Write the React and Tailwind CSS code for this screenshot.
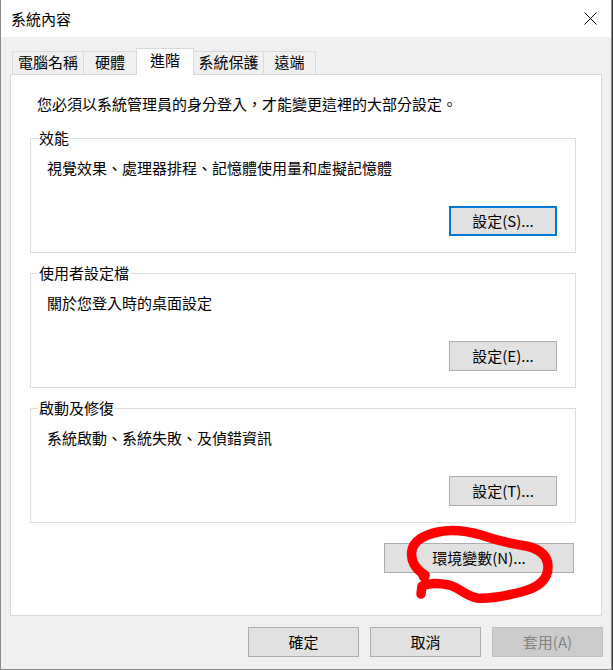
const font = "font-['Noto_Sans_CJK_TC','Noto_Sans_CJK_JP',sans-serif]";

const tabs = [
  { label: "電腦名稱", w: "w-[72px]" },
  { label: "硬體", w: "w-[54px]" },
  { label: "進階", w: "w-[58px]", active: true },
  { label: "系統保護", w: "w-[71px]" },
  { label: "遠端", w: "w-[53px]" },
];

const groups = [
  { title: "效能", desc: "視覺效果、處理器排程、記憶體使用量和虛擬記憶體", btn: "設定(S)...", focused: true },
  { title: "使用者設定檔", desc: "關於您登入時的桌面設定", btn: "設定(E)..." },
  { title: "啟動及修復", desc: "系統啟動、系統失敗、及偵錯資訊", btn: "設定(T)..." },
];

const WinButton = ({ children, className = "", focused, disabled }) => (
  <button
    className={
      "h-[30px] flex items-center justify-center text-[15px] leading-[20px] " +
      (disabled
        ? "bg-[#cccccc] border border-[#bfbfbf] text-[#838383] "
        : focused
        ? "bg-[#e1e1e1] border-2 border-[#0078d7] text-black "
        : "bg-[#e1e1e1] border border-[#adadad] text-black ") +
      className
    }
  >
    {children}
  </button>
);

export default function App() {
  return (
    <div className={`relative w-[613px] h-[670px] bg-[#3a3a3a] overflow-hidden ${font}`}>
      <div className="w-[612px] h-[670px] flex flex-col border-x border-b border-[#8a8a8a] bg-[#f0f0f0]">
        {/* title bar */}
        <div className="h-[37px] shrink-0 bg-white flex items-center justify-between pl-[10px] pr-[14px]">
          <span className="text-[15px] leading-[20px] text-black">系統內容</span>
          <svg width="13" height="13" viewBox="0 0 13 13" className="text-black">
            <path d="M0.5 0.5 L12.5 12.5 M12.5 0.5 L0.5 12.5" stroke="currentColor" strokeWidth="1" fill="none" />
          </svg>
        </div>

        <div className="pl-[9px] pt-[11px]">
          {/* tabs */}
          <div className="flex items-end h-[26px] pl-[2px]">
            {tabs.map((t, i) => (
              <div
                key={t.label}
                className={
                  "border border-[#d9d9d9] flex justify-center text-[15px] leading-[20px] text-black " +
                  t.w +
                  (i > 0 ? " -ml-px" : "") +
                  (t.active
                    ? " relative z-10 h-[27px] mb-[-1px] bg-white border-b-0 pt-[1px]"
                    : " h-[23px] bg-[#f0f0f0] border-b-0 pt-[0px]")
                }
              >
                {t.label}
              </div>
            ))}
          </div>

          {/* tab panel */}
          <div className="w-[592px] h-[542px] bg-white border border-[#d9d9d9] flex flex-col pl-[19px] pr-[25px] pt-[19px]">
            <p className="pl-[7px] text-[15px] leading-[20px] text-black">
              您必須以系統管理員的身分登入，才能變更這裡的大部分設定。
            </p>

            <div className="mt-[14px] flex flex-col gap-[10px]">
              {groups.map((g) => (
                <fieldset key={g.title} className="border border-[#dcdcdc]">
                  <legend className="ml-[7px] px-[1px] text-[15px] leading-[20px] text-black">{g.title}</legend>
                  <div className="flex flex-col pl-[16px] pr-[18px] pb-[16px]">
                    <p className="mt-[10px] text-[15px] leading-[20px] text-black">{g.desc}</p>
                    <WinButton focused={g.focused} className="self-end mt-[28px] w-[108px]">
                      {g.btn}
                    </WinButton>
                  </div>
                </fieldset>
              ))}
            </div>

            <WinButton className="self-end mt-[20px] mr-[2px] w-[190px]">環境變數(N)...</WinButton>
          </div>

          {/* dialog buttons */}
          <div className="w-[593px] flex justify-end gap-[11px] mt-[11px]">
            <WinButton className="w-[111px]">確定</WinButton>
            <WinButton className="w-[111px]">取消</WinButton>
            <WinButton disabled className="w-[111px]">套用(A)</WinButton>
          </div>
        </div>
      </div>

      {/* red marker annotation */}
      <svg className="absolute inset-0 pointer-events-none" width="613" height="670" viewBox="0 0 613 670">
        <path
          d="M425 575 C 415 569, 410 560, 412 550 C 414 541, 424 535, 438 532 C 452 529, 467 531, 481 535 C 496 540, 511 544, 526 546 C 540 549, 548 556, 548 567 C 548 580, 537 588, 521 592 C 505 596, 490 599, 477 598 C 466 596, 460 588, 449 585 C 439 583, 429 583, 422 586 L 421 594"
          stroke="#ff0000"
          strokeWidth="9.5"
          strokeLinecap="round"
          strokeLinejoin="round"
          fill="none"
        />
        <circle cx="424" cy="576" r="5.5" fill="#ff0000" />
      </svg>
    </div>
  );
}
